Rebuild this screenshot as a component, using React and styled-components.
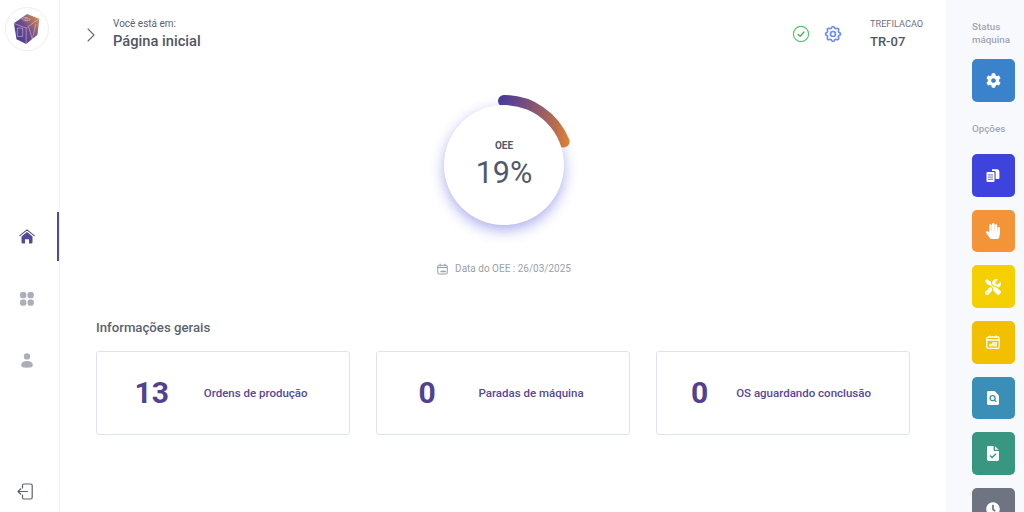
import React from "react";
import styled, { createGlobalStyle } from "styled-components";
import { HiOutlineCog } from "react-icons/hi";
import { FaCog, FaHandPaper, FaTools, FaClock } from "react-icons/fa";

const Global = createGlobalStyle`
  html, body { margin: 0; padding: 0; height: 512px; overflow: hidden; background: #fff; }
  body { font-family: Roboto, "Noto Sans", sans-serif; }
  #root { height: 512px; }
  * { box-sizing: border-box; }
`;
const Page = styled.div`
  display: grid; grid-template-columns: 60px 1fr 78px; height: 512px; overflow: hidden;
`;
const Sidebar = styled.aside`
  display: flex; flex-direction: column; align-items: center; border-right: 1px solid #eff0f6; height: 512px; padding-top: 7px;
`;
const LogoCircle = styled.div`
  width: 44px; height: 44px; border-radius: 50%; border: 1px solid #eeeef2; display: flex; align-items: center; justify-content: center; margin-right: 5px;
`;
const Nav = styled.nav`
  display: flex; flex-direction: column; width: 100%; margin-top: 161px; flex: 1;
`;
const NavItem = styled.div`
  height: 49px; margin-bottom: 13px; display: flex; align-items: center; justify-content: center; padding-right: 4px;
  border-right: 2px solid ${p => (p.$active ? "#56479c" : "transparent")};
  &:last-child { margin-top: auto; margin-bottom: -4px; padding-right: 6px; }
`;
const Main = styled.main`
  display: flex; flex-direction: column; padding: 0 36px; min-width: 0;
`;
const Header = styled.header`
  display: flex; align-items: center; height: 64px; padding-top: 4px; margin: 0 0 25px -10px;
`;
const ChevronSvg = styled.svg`
  margin-top: 2px; flex: none;
`;
const Crumb = styled.div`
  display: flex; flex-direction: column; margin-left: 17px; flex: 1;
`;
const CrumbSmall = styled.span`
  font-size: 10px; line-height: 13px; color: #5c6270; margin-bottom: 1px;
`;
const CrumbTitle = styled.span`
  font-size: 14.7px; line-height: 20px; font-weight: 500; color: #4f5663;
`;
const StatusIcons = styled.div`
  display: flex; gap: 13px; align-items: center; margin-right: 27px; margin-top: -1px;
`;
const Machine = styled.div`
  display: flex; flex-direction: column; width: 62px; margin-right: -22px;
`;
const MachineKind = styled.span`
  font-size: 9.2px; line-height: 12px; color: #6d7280; margin-bottom: 3px;
`;
const MachineName = styled.span`
  font-size: 13px; line-height: 17px; font-weight: 500; color: #4f5663;
`;
const GaugeWrap = styled.div`
  position: relative; width: 160px; height: 150px; align-self: center; margin-bottom: 23px; margin-left: 2px;
`;
const GaugeFace = styled.div`
  position: absolute; left: 20px; top: 16px; width: 120px; height: 120px; border-radius: 50%; background: #fff;
  box-shadow: 0 5px 14px rgba(70, 76, 214, 0.45);
  display: flex; flex-direction: column; align-items: center; padding-top: 35px;
`;
const GaugeLabel = styled.span`
  font-size: 10px; line-height: 12px; font-weight: 700; color: #4f5a6e;
`;
const GaugeValue = styled.span`
  font-size: 30.5px; line-height: 36px; color: #4f5a6e; margin-top: 3px;
`;
const DateRow = styled.div`
  display: flex; align-items: center; justify-content: center; gap: 7px; font-size: 10px; line-height: 14px; color: #9aa0ac; margin: 0 0 43px 2px;
`;
const SectionTitle = styled.h2`
  margin: 0 0 14px; font-size: 13.2px; line-height: 18px; font-weight: 500; color: #5c6370;
`;
const Cards = styled.div`
  display: grid; grid-template-columns: repeat(3, 1fr); gap: 26px;
`;
const Card = styled.div`
  height: 84px; padding: 0 24px 0 20px; border: 1px solid #dfe3ec; border-radius: 3px; display: flex; align-items: center; justify-content: space-around; background: #fff;
`;
const CardNumber = styled.span`
  font-size: 30px; line-height: 36px; font-weight: 700; color: #51418f;
`;
const CardLabel = styled.span`
  font-size: 11.5px; line-height: 14px; font-weight: 500; color: #56489a;
`;
const Rail = styled.aside`
  background: #f8f9fc; padding: 20px 9px 0 26px; height: 512px; overflow: hidden;
`;
const RailTitle = styled.div`
  font-size: 9.8px; line-height: 13px; color: #a2a6b2; font-weight: 500; margin: ${p => p.$m || "0"};
`;
const ActionList = styled.div`
  display: flex; flex-direction: column; gap: 13px;
`;
const Action = styled.button`
  width: 42.67px; height: 42.67px; flex: none; padding: 0; border: 0; border-radius: 5px; background: ${p => p.$color}; color: #fff;
  display: flex; align-items: center; justify-content: center;
`;

const Logo = () => (
  <svg width="28" height="32" viewBox="0 0 32 34" preserveAspectRatio="none">
    <defs>
      <linearGradient id="lg" x1="0" y1="1" x2="1" y2="0">
        <stop offset="0" stopColor="#3f3590" />
        <stop offset="0.5" stopColor="#6d4a8e" />
        <stop offset="1" stopColor="#ee9440" />
      </linearGradient>
    </defs>
    <path d="M16 1 L30 6 L28 23 L15 33 L4 28 L1 11 Z" fill="url(#lg)" />
    <g stroke="#efe9f2" strokeWidth="0.8" fill="none" opacity="0.6">
      <path d="M1 11 L15 16 L30 6 M15 16 L15 33" />
      <path d="M5 16 v9 h6 v-9 z M18 15 l4 13 l4 -16" />
      <path d="M10 6 q5 -3 10 1 q-5 3 -10 -1 z" />
      <circle cx="15" cy="6.5" r="1.3" />
    </g>
  </svg>
);
const Chevron = () => (
  <ChevronSvg width="10" height="14" viewBox="0 0 10 14" fill="none" stroke="#666c78" strokeWidth="1.1" strokeLinecap="round" strokeLinejoin="round">
    <path d="M2 1 L8 7 L2 13" />
  </ChevronSvg>
);
const CheckCircle = () => (
  <svg width="18" height="18" viewBox="0 0 18 18" fill="none" stroke="#4fc66f" strokeWidth="1.2" strokeLinecap="round" strokeLinejoin="round">
    <circle cx="9" cy="9" r="7.6" />
    <path d="M6 9.3 L8.1 11.3 L12 7" stroke="#3ea55c" />
  </svg>
);
const HomeIcon = () => (
  <svg width="16" height="15" viewBox="0 0 16 15">
    <path d="M0.8 6.6 L8 0.9 L15.2 6.6" fill="none" stroke="#56479c" strokeWidth="1.1" strokeLinecap="round" strokeLinejoin="round" />
    <path d="M8 3 L13.5 7.4 V13.3 Q13.5 14.4 12.4 14.4 H10 V10.2 H6 V14.4 H3.6 Q2.5 14.4 2.5 13.3 V7.4 Z" fill="#56479c" />
  </svg>
);
const GridIcon = () => (
  <svg width="14" height="14" viewBox="0 0 14 14" fill="#abafb9">
    <rect x="0" y="0" width="6.3" height="6.3" rx="2.3" />
    <rect x="7.5" y="0" width="6.3" height="6.3" rx="2.3" />
    <rect x="0" y="7.5" width="6.3" height="6.3" rx="2.3" />
    <rect x="7.5" y="7.5" width="6.3" height="6.3" rx="2.3" />
  </svg>
);
const UserIcon = () => (
  <svg width="12" height="15" viewBox="0 0 12 15" fill="#abafb9">
    <circle cx="6" cy="3.4" r="3.2" />
    <path d="M0.2 12.3 C0.2 9.3 3 8 6 8 C9 8 11.8 9.3 11.8 12.3 C11.8 14 10 14.8 6 14.8 C2 14.8 0.2 14 0.2 12.3 Z" />
  </svg>
);
const LogoutIcon = () => (
  <svg width="17" height="17" viewBox="0 0 17 17" fill="none" stroke="#5c6270" strokeWidth="1.2" strokeLinecap="round" strokeLinejoin="round">
    <path d="M5.5 5 V2.5 Q5.5 1 7 1 H13.6 Q15.2 1 15.2 2.5 V14.5 Q15.2 16 13.6 16 H7 Q5.5 16 5.5 14.5 V12" />
    <path d="M10.5 8.5 H1 M3.8 5.8 L1 8.5 L3.8 11.2" />
  </svg>
);
const DateIcon = () => (
  <svg width="11" height="12" viewBox="0 0 12 12" fill="none" stroke="#9aa0ac" strokeWidth="1.1" strokeLinecap="round">
    <rect x="0.8" y="1.8" width="10.4" height="9.6" rx="1.6" />
    <path d="M3.4 0.5 V2.6 M8.6 0.5 V2.6 M0.8 4.4 H11.2" />
    <path d="M4.5 8.8 H9" strokeWidth="1.6" />
  </svg>
);
const DocsIcon = () => (
  <svg width="14" height="15" viewBox="0 0 14 14" fill="#fff">
    <path d="M0.5 4.6 Q0.5 3.6 1.5 3.6 H7.5 Q8.5 3.6 8.5 4.6 V12.6 Q8.5 13.6 7.5 13.6 H1.5 Q0.5 13.6 0.5 12.6 Z" />
    <path d="M6 0.8 H11 Q13.4 0.8 13.4 3.2 V9.6 Q13.4 10.6 12.4 10.6 H9.6 V3.8 Q9.6 2.5 8.2 2.5 H6 Z" />
    <path d="M2 6.4 H7 M2 8.6 H7 M2 10.8 H7" stroke="#3d43dc" strokeWidth="0.8" />
  </svg>
);
const CalendarIcon = () => (
  <svg width="14" height="14" viewBox="0 0 14 14">
    <rect x="0.7" y="2" width="12.6" height="11.4" rx="2" fill="none" stroke="#fff" strokeWidth="1.3" />
    <path d="M3.8 0.5 V3 M10.2 0.5 V3 M1 5 H13" stroke="#fff" strokeWidth="1.3" />
    <path d="M3 11.4 V8.8 H6 V7 H11 V11.4 Z" fill="#fff" opacity="0.75" />
  </svg>
);
const FileSearchIcon = () => (
  <svg width="12" height="14" viewBox="0 0 12 14">
    <path d="M1.4 0 H7.6 L12 4.4 V12.6 Q12 14 10.6 14 H1.4 Q0 14 0 12.6 V1.4 Q0 0 1.4 0 Z" fill="#fff" />
    <circle cx="5.6" cy="7.2" r="2.5" fill="none" stroke="#3b8fb6" strokeWidth="1.3" />
    <path d="M7.5 9.1 L9.3 10.9" stroke="#3b8fb6" strokeWidth="1.3" />
  </svg>
);
const FileCheckIcon = () => (
  <svg width="12" height="15" viewBox="0 0 12 15">
    <path d="M1.4 0 H6.6 V4 Q6.6 5 7.6 5 H12 V13.6 Q12 15 10.6 15 H1.4 Q0 15 0 13.6 V1.4 Q0 0 1.4 0 Z" fill="#fff" />
    <path d="M8 0.3 L11.7 3.8 H8 Z" fill="#fff" />
    <path d="M3 9.6 L5.1 11.6 L9 7.8" fill="none" stroke="#389681" strokeWidth="1.4" />
  </svg>
);

const actions = [
  { color: "#3d43dc", icon: <DocsIcon /> },
  { color: "#f39439", icon: <FaHandPaper size={16} /> },
  { color: "#f4d000", icon: <FaTools size={16} /> },
  { color: "#f3c000", icon: <CalendarIcon /> },
  { color: "#3b8fb6", icon: <FileSearchIcon /> },
  { color: "#389681", icon: <FileCheckIcon /> },
  { color: "#6f7482", icon: <FaClock size={14} /> },
];
const stats = [
  { value: "13", label: "Ordens de produção" },
  { value: "0", label: "Paradas de máquina" },
  { value: "0", label: "OS aguardando conclusão" },
];

export default function App() {
  return (
    <Page>
      <Global />
      <Sidebar>
        <LogoCircle><Logo /></LogoCircle>
        <Nav>
          <NavItem $active><HomeIcon /></NavItem>
          <NavItem><GridIcon /></NavItem>
          <NavItem><UserIcon /></NavItem>
          <NavItem><LogoutIcon /></NavItem>
        </Nav>
      </Sidebar>
      <Main>
        <Header>
          <Chevron />
          <Crumb>
            <CrumbSmall>Você está em:</CrumbSmall>
            <CrumbTitle>Página inicial</CrumbTitle>
          </Crumb>
          <StatusIcons>
            <CheckCircle />
            <HiOutlineCog size={20} color="#6c8cf5" />
          </StatusIcons>
          <Machine>
            <MachineKind>TREFILACAO</MachineKind>
            <MachineName>TR-07</MachineName>
          </Machine>
        </Header>
        <GaugeWrap>
          <svg width="160" height="150" viewBox="0 0 160 150">
            <defs>
              <linearGradient id="arc" x1="74" y1="12" x2="140" y2="56" gradientUnits="userSpaceOnUse">
                <stop offset="0" stopColor="#473a99" />
                <stop offset="1" stopColor="#e4802f" />
              </linearGradient>
            </defs>
            <path d="M80 12 A64 64 0 0 1 139.5 52.5" fill="none" stroke="url(#arc)" strokeWidth="12" strokeLinecap="round" />
          </svg>
          <GaugeFace>
            <GaugeLabel>OEE</GaugeLabel>
            <GaugeValue>19%</GaugeValue>
          </GaugeFace>
        </GaugeWrap>
        <DateRow><DateIcon /><span>Data do OEE : 26/03/2025</span></DateRow>
        <SectionTitle>Informações gerais</SectionTitle>
        <Cards>
          {stats.map(s => (
            <Card key={s.label}>
              <CardNumber>{s.value}</CardNumber>
              <CardLabel>{s.label}</CardLabel>
            </Card>
          ))}
        </Cards>
      </Main>
      <Rail>
        <RailTitle $m="0 0 13px">Status<br />máquina</RailTitle>
        <Action $color="#3a82cb"><FaCog size={15} /></Action>
        <RailTitle $m="20px 0 19.33px">Opções</RailTitle>
        <ActionList>
          {actions.map(a => <Action key={a.color} $color={a.color}>{a.icon}</Action>)}
        </ActionList>
      </Rail>
    </Page>
  );
}
